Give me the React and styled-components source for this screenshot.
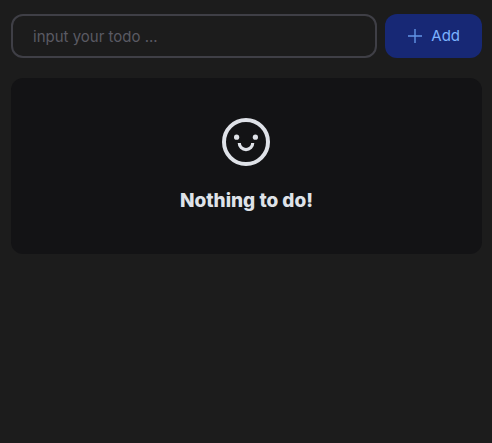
import React, { useState } from "react";
import styled, { createGlobalStyle } from "styled-components";

const GlobalStyle = createGlobalStyle`
  *, *::before, *::after {
    box-sizing: border-box;
  }

  body {
    margin: 0;
    background: #1c1c1c;
    color: #dfe2e8;
    font-family: Inter, "Liberation Sans", sans-serif;
    font-size: 15px;
    line-height: 24px;
  }
`;

const Page = styled.main`
  display: flex;
  flex-direction: column;
  gap: 20px;
  padding: 14px 10px 14px 11px;
`;

const TodoForm = styled.form`
  display: flex;
  gap: 8px;
`;

const TodoInput = styled.input`
  flex: 1;
  min-width: 0;
  height: 44px;
  padding: 0 20px;
  border: 2px solid #3f3f46;
  border-radius: 12px;
  outline: none;
  background: transparent;
  color: #dfe2e8;
  font: inherit;

  &::placeholder {
    color: #5a5a63;
    opacity: 1;
  }
`;

const AddButton = styled.button`
  display: flex;
  align-items: center;
  gap: 8px;
  height: 44px;
  padding: 0 22px;
  border: 0;
  border-radius: 12px;
  background: #172875;
  color: #7cb2ff;
  font: inherit;
  cursor: pointer;
`;

const EmptyPanel = styled.section`
  display: flex;
  flex-direction: column;
  align-items: center;
  gap: 20px;
  padding: 40px 20px 38px;
  border-radius: 12px;
  background: #131315;
`;

const EmptyTitle = styled.h1`
  margin: 0;
  font-size: 19px;
  font-weight: 800;
  line-height: 30px;
`;

const PlusIcon = () => (
  <svg width="16" height="16" viewBox="0 0 16 16" fill="none" stroke="#6394e6" strokeWidth="1.4" aria-hidden="true">
    <path d="M1 8h14M8 1v14" />
  </svg>
);

const SmileIcon = () => (
  <svg width="49" height="48" viewBox="0 0 49 48" fill="none" aria-hidden="true">
    <circle cx="24" cy="24" r="22" stroke="currentColor" strokeWidth="4" />
    <circle cx="14.6" cy="19.2" r="2.6" fill="currentColor" />
    <circle cx="33.4" cy="19.2" r="2.6" fill="currentColor" />
    <path d="M17.3 25a6.7 6.7 0 0 0 13.4 0" stroke="currentColor" strokeWidth="3.2" />
  </svg>
);

export default function App() {
  const [text, setText] = useState("");

  return (
    <>
      <GlobalStyle />
      <Page>
        <TodoForm onSubmit={(event) => event.preventDefault()}>
          <TodoInput
            type="text"
            aria-label="Todo"
            placeholder="input your todo ..."
            value={text}
            onChange={(event) => setText(event.target.value)}
          />
          <AddButton type="submit">
            <PlusIcon />
            Add
          </AddButton>
        </TodoForm>
        <EmptyPanel>
          <SmileIcon />
          <EmptyTitle>Nothing to do!</EmptyTitle>
        </EmptyPanel>
      </Page>
    </>
  );
}
